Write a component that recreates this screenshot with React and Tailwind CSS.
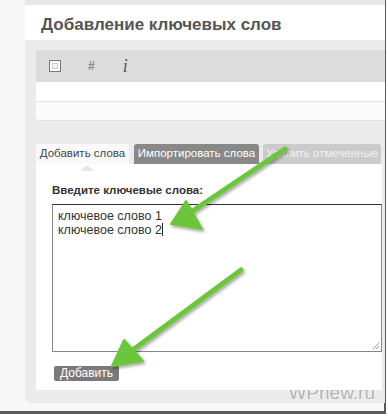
import React from "react";

const Arrows = () => (
  <svg
    className="absolute inset-0 pointer-events-none"
    width="388"
    height="418"
    viewBox="0 0 388 418"
  >
    <defs>
      <filter id="sh" x="-20%" y="-20%" width="140%" height="140%">
        <feDropShadow dx="1.5" dy="2" stdDeviation="1.5" floodColor="#000" floodOpacity="0.35" />
      </filter>
    </defs>
    <g filter="url(#sh)" fill="#6cc63a" stroke="#6cc63a" strokeLinecap="round" strokeLinejoin="round">
      <line x1="285" y1="149" x2="188" y2="214" strokeWidth="5" />
      <polygon points="171,224 186,201 202,229" strokeWidth="2" />
      <line x1="241" y1="270" x2="130" y2="352" strokeWidth="5" />
      <polygon points="112,366 124,340 143,361" strokeWidth="2" />
    </g>
  </svg>
);

export default function App() {
  return (
    <div className="relative w-[388px] h-[418px] bg-white overflow-hidden font-['Liberation_Sans',Arial,sans-serif]">
      <div className="w-[386px] h-[414px] border-r-2 border-b-[3px] border-[#5a5a5a] bg-[#f7f7f7] flex flex-col">
        <div className="flex flex-1">
          <div className="w-[25px] shrink-0" />
          <div className="flex-1 flex flex-col bg-[#ebebeb] rounded-bl-[6px]">
            <div className="h-[5px] bg-[#e8e8e8]" />
            {/* header */}
            <div className="h-[35px] bg-white flex items-center pl-[16px] pt-[4px]">
              <h1 className="text-[17px] font-bold text-[#555]">Добавление ключевых слов</h1>
            </div>

            <div className="pl-[11px] pt-[10px]">
              {/* toolbar */}
              <div className="h-[32px] bg-[#dcdcdc] flex items-center">
                <div className="ml-[13px] w-[12px] h-[12px] border border-[#777] bg-white p-[2px]">
                  <div className="w-full h-full border border-[#ccc] bg-[#f4f4f4]" />
                </div>
                <span className="ml-[27px] text-[12px] text-[#666] leading-none">#</span>
                <span className="ml-[28px] text-[18px] italic text-[#555] leading-none font-['Liberation_Serif',serif]">i</span>
              </div>
              <div className="h-[20px] bg-white border-b border-[#e4e4e4]" />
              <div className="h-[19px] bg-[#fbfbfb] border-b border-[#e2e2e2] rounded-bl-[3px]" />

              {/* tabs */}
              <div className="mt-[23px] flex items-end h-[20px] text-[11.5px] whitespace-nowrap pr-[3px]">
                <div className="w-[93px] h-[20px] flex items-center justify-center bg-[#fafafa] text-[#444] rounded-t-[2px]">
                  Добавить слова
                </div>
                <div className="ml-[5px] w-[125px] h-[20px] flex items-center justify-center bg-[#888] text-white rounded-t-[3px]">
                  Импортировать слова
                </div>
                <div className="ml-[4px] w-[118px] h-[20px] flex items-center justify-center bg-[#cbcbcb] text-[#f2f2f2] rounded-t-[3px]">
                  Удалить отмеченные
                </div>
              </div>

              {/* tab panel */}
              <div className="relative mr-[3px] bg-white h-[226px] pl-[16px] pt-[19px]">
                <div className="absolute left-[44px] top-[1px] w-0 h-0 border-l-[7px] border-r-[7px] border-b-[6px] border-l-transparent border-r-transparent border-b-[#e6e6e6]" />
                <div className="text-[11.5px] font-bold text-[#333] leading-[15px]">Введите ключевые слова:</div>
                <div className="relative mt-[6px] w-[330px] h-[148px] border border-[#888] border-t-[#333] bg-white px-[5px] py-[5px] text-[12.5px] text-[#333] leading-[13px]">
                  <div>ключевое слово 1</div>
                  <div>
                    ключевое слово 2<span className="inline-block w-px h-[13px] bg-[#222] align-[-2px]" />
                  </div>
                  <svg className="absolute right-[1px] bottom-[1px]" width="9" height="9" viewBox="0 0 9 9">
                    <line x1="8" y1="2" x2="2" y2="8" stroke="#999" strokeWidth="1" />
                    <line x1="8" y1="5" x2="5" y2="8" stroke="#999" strokeWidth="1" />
                  </svg>
                </div>
                <button className="mt-[14px] ml-[2px] h-[15px] px-[6px] bg-[#7a7a7a] text-white text-[12px] leading-[15px] rounded-[2px]">
                  Добавить
                </button>
              </div>
            </div>

            {/* bottom strip with watermark */}
            <div className="flex-1 flex justify-end items-start pr-[10px]">
              <span className="-mt-[7px] text-[19px] leading-[20px] text-[#b4b4b4] [text-shadow:0_0_2px_#fff]">
                WPnew.ru
              </span>
            </div>
          </div>
        </div>
        <div className="h-[11px]" />
      </div>
      <Arrows />
    </div>
  );
}
